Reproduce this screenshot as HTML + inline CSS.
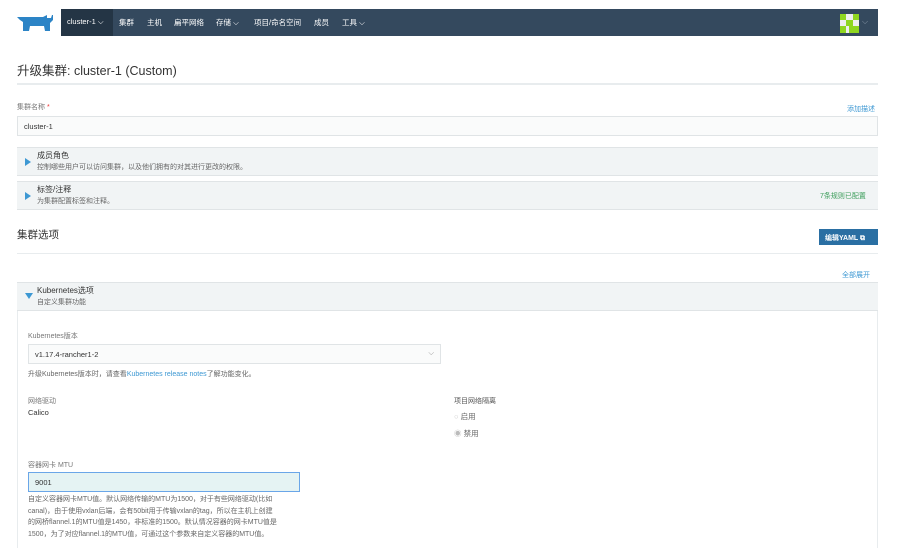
<!DOCTYPE html>
<html><head><meta charset="utf-8"><style>
*{box-sizing:border-box;margin:0;padding:0}
body{width:906px;height:548px;overflow:hidden;background:#fff;font-family:"Liberation Sans","Noto Sans CJK SC",sans-serif;color:#333;position:relative}
.a{position:absolute}
.nav{left:61px;top:9px;width:817px;height:27px;background:#34495e}
.ni{position:absolute;top:17px;color:#fff;font-size:7.5px;white-space:nowrap}
.lbl{font-size:7px;color:#777}
.panel{left:17px;width:861px;background:#f1f4f5;border-top:1px solid #e0e4e6;border-bottom:1px solid #e0e4e6}
.tri{width:0;height:0;border-top:4px solid transparent;border-bottom:4px solid transparent;border-left:6px solid #3d98d3}
.hr{left:17px;width:861px;height:1px;background:#e8ecee}
.link{color:#3d98d3;font-size:7px}
.sm{font-size:7px;color:#666;white-space:nowrap}
</style></head><body>
<svg class="a" style="left:17px;top:14px" width="38" height="18" viewBox="0 0 38 18"><path d="M0 3h26l4-2v3h4l1-3 1 0v5l-3 3v8h-5l-1-5h-14l-1 5h-6v-9l-3-2z" fill="#2c84c6"/></svg>
<div class="a nav"></div>
<div class="a" style="left:61px;top:9px;width:52px;height:27px;background:#243545"></div>
<span class="a ni" style="left:67px">cluster-1 ⌵</span><span class="a ni" style="left:119px">集群</span><span class="a ni" style="left:147px">主机</span><span class="a ni" style="left:174px">扁平网络</span><span class="a ni" style="left:216px">存储 ⌵</span><span class="a ni" style="left:254px">项目/命名空间</span><span class="a ni" style="left:314px">成员</span><span class="a ni" style="left:342px">工具 ⌵</span>
<div class="a" style="left:840px;top:14px;width:19px;height:19px;background:#8fd620"></div>
<div class="a" style="left:846px;top:14px;width:7px;height:6px;background:#eee"></div>
<div class="a" style="left:840px;top:20px;width:6px;height:6px;background:#eee"></div>
<div class="a" style="left:853px;top:20px;width:6px;height:6px;background:#eee"></div>
<div class="a" style="left:846px;top:26px;width:3px;height:7px;background:#eee"></div>
<div class="a" style="left:862px;top:17px;color:#8a99a8;font-size:8px">⌵</div>

<div class="a" style="left:17px;top:60px;font-size:12.5px;color:#333">升级集群: cluster-1 (Custom)</div>
<div class="a hr" style="top:83px;height:2px"></div>
<div class="a lbl" style="left:17px;top:102px">集群名称 <span style="color:#e33">*</span></div>
<div class="a link" style="left:847px;top:104px">添加描述</div>
<div class="a" style="left:17px;top:116px;width:861px;height:20px;background:#fafbfb;border:1px solid #e0e4e6;font-size:7.5px;padding:5px 6px">cluster-1</div>

<div class="a panel" style="top:147px;height:29px"></div>
<div class="a tri" style="left:25px;top:158px"></div>
<div class="a" style="left:37px;top:150px;font-size:8px">成员角色</div>
<div class="a sm" style="left:37px;top:162px">控制哪些用户可以访问集群，以及他们拥有的对其进行更改的权限。</div>
<div class="a panel" style="top:181px;height:29px"></div>
<div class="a tri" style="left:25px;top:192px"></div>
<div class="a" style="left:37px;top:184px;font-size:8px">标签/注释</div>
<div class="a sm" style="left:37px;top:196px">为集群配置标签和注释。</div>
<div class="a" style="left:820px;top:191px;font-size:7px;color:#3a9c59">7条规则已配置</div>

<div class="a" style="left:17px;top:227px;font-size:10.5px">集群选项</div>
<div class="a" style="left:819px;top:229px;width:59px;height:16px;background:#2a6fa3;color:#fff;font-size:7px;padding:4px 6px;font-weight:bold">编辑YAML ⧉</div>
<div class="a hr" style="top:253px"></div>
<div class="a link" style="left:842px;top:270px">全部展开</div>

<div class="a panel" style="top:282px;height:29px"></div>
<div class="a" style="left:17px;top:311px;width:861px;height:237px;border-left:1px solid #e8ecee;border-right:1px solid #e8ecee"></div>
<div class="a" style="left:25px;top:293px;border-left:4px solid transparent;border-right:4px solid transparent;border-top:6px solid #3d98d3"></div>
<div class="a" style="left:37px;top:285px;font-size:8px">Kubernetes选项</div>
<div class="a sm" style="left:37px;top:297px">自定义集群功能</div>

<div class="a lbl" style="left:28px;top:331px">Kubernetes版本</div>
<div class="a" style="left:28px;top:344px;width:413px;height:20px;background:#fafbfb;border:1px solid #e0e4e6;font-size:7.5px;padding:5px 6px">v1.17.4-rancher1-2<span style="position:absolute;right:6px;top:3px;color:#999">⌵</span></div>
<div class="a sm" style="left:28px;top:369px">升级Kubernetes版本时，请查看<span style="color:#3d98d3">Kubernetes release notes</span>了解功能变化。</div>
<div class="a lbl" style="left:28px;top:396px">网络驱动</div>
<div class="a" style="left:28px;top:408px;font-size:7.5px">Calico</div>
<div class="a lbl" style="left:454px;top:396px;color:#555">项目网络隔离</div>
<div class="a" style="left:454px;top:411px;font-size:7.5px;color:#666"><span style="color:#ccc">○</span> 启用</div>
<div class="a" style="left:454px;top:428px;font-size:7.5px;color:#666"><span style="color:#bbb">◉</span> 禁用</div>
<div class="a lbl" style="left:28px;top:460px">容器网卡 MTU</div>
<div class="a" style="left:28px;top:472px;width:272px;height:20px;background:#e5f3f3;border:1.5px solid #6aa6e8;font-size:7.5px;padding:5px 6px">9001</div>
<div class="a sm" style="left:28px;top:494px;line-height:11.5px">自定义容器网卡MTU值。默认网络传输的MTU为1500，对于有些网络驱动(比如<br>canal)，由于使用vxlan后端，会有50bit用于传输vxlan的tag，所以在主机上创建<br>的网桥flannel.1的MTU值是1450，非标准的1500。默认情况容器的网卡MTU值是<br>1500，为了对应flannel.1的MTU值，可通过这个参数来自定义容器的MTU值。</div>
</body></html>
